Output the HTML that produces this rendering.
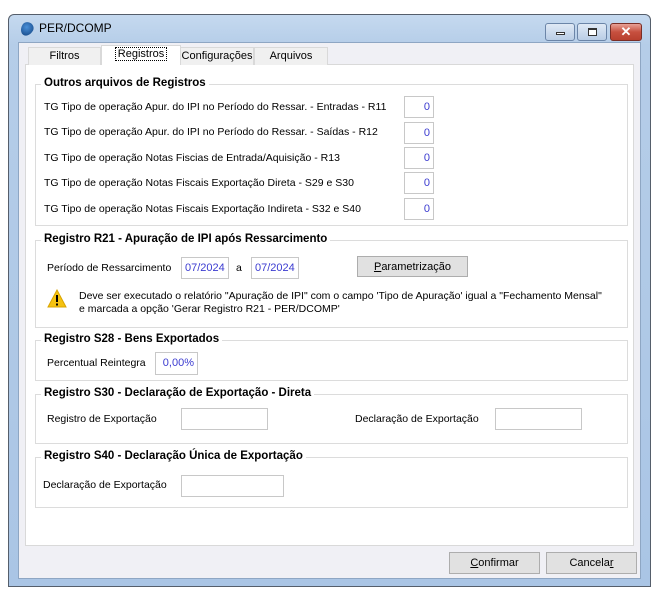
<!DOCTYPE html>
<html><head><style>
*{box-sizing:border-box;margin:0;padding:0}
body{width:657px;height:599px;background:#fff;font-family:"Liberation Sans",sans-serif;font-size:10.5px;color:#000;position:relative;overflow:hidden}
.a{position:absolute}
.win{left:8px;top:14px;width:643px;height:573px;border:1px solid #555e6b;border-radius:6px 6px 0 0;background:linear-gradient(#c5d9ef,#b5cde8 30px,#aac5e5);}
.body{left:18px;top:42px;width:623px;height:537px;background:#f0f0f5;border:1px solid #8ea6c3}
.panel{left:25px;top:64px;width:609px;height:482px;background:#fff;border:1px solid #d9d9d9}
.tab{top:47px;height:18px;background:#f0f0f0;border:1px solid #d9d9d9;border-bottom:none;text-align:center;line-height:17px;font-size:11px}
.grp{border:1px solid #dcdcdc;left:35px;width:593px}
.gt{font-weight:bold;background:#fff;padding:0 3px;left:41px;font-size:11.5px}
.in{border:1px solid #c8c8c8;background:#fff;height:22px;color:#3b3bd0;line-height:20px;padding:0 3px;font-size:11px}
.btn{border:1px solid #adadad;background:#e1e1e1;text-align:center;line-height:20px;height:22px;font-size:11px}
</style></head><body>
<div class="a win"></div>
<div class="a" style="left:21px;top:22px;width:12px;height:14px;background:radial-gradient(circle at 40% 40%,#4a90d9,#0d3d7a);border-radius:50% 50% 50% 50%/40% 40% 60% 60%;transform:rotate(30deg)"></div>
<div class="a" style="left:39px;top:21px;font-size:12px">PER/DCOMP</div>
<div class="a" style="left:545px;top:23px;width:30px;height:18px;border:1px solid #6b85a8;border-radius:3px;background:linear-gradient(#dfe9f5,#b9cde6)"><div class="a" style="left:10px;top:8px;width:9px;height:3px;border:1px solid #333;background:#fff"></div></div>
<div class="a" style="left:577px;top:23px;width:30px;height:18px;border:1px solid #6b85a8;border-radius:3px;background:linear-gradient(#dfe9f5,#b9cde6)"><div class="a" style="left:10px;top:4px;width:9px;height:8px;border:1px solid #333;border-top-width:2px;background:#fff"></div></div>
<div class="a" style="left:610px;top:23px;width:32px;height:18px;border:1px solid #7a2e26;border-radius:3px;background:linear-gradient(#e8a196,#c7503f 50%,#b8402f);color:#fff;font-weight:bold;text-align:center;line-height:16px;font-size:13px">✕</div>
<div class="a body"></div>
<div class="a panel"></div>
<div class="a tab" style="left:28px;width:73px">Filtros</div>
<div class="a tab" style="left:180px;width:74px">Configurações</div>
<div class="a tab" style="left:254px;width:74px">Arquivos</div>
<div class="a tab" style="left:101px;top:45px;width:80px;height:20px;background:#fff"><span style="border:1px dotted #000;padding:0 2px">Registros</span></div>

<div class="a grp" style="top:84px;height:142px"></div>
<div class="a gt" style="top:77px">Outros arquivos de Registros</div>
<div class="a" style="left:44px;top:101px">TG Tipo de operação Apur. do IPI no Período do Ressar. - Entradas - R11</div>
<div class="a" style="left:44px;top:126px">TG Tipo de operação Apur. do IPI no Período do Ressar. - Saídas - R12</div>
<div class="a" style="left:44px;top:152px">TG Tipo de operação Notas Fiscias de Entrada/Aquisição - R13</div>
<div class="a" style="left:44px;top:177px">TG Tipo de operação Notas Fiscais Exportação Direta - S29 e S30</div>
<div class="a" style="left:44px;top:203px">TG Tipo de operação Notas Fiscais Exportação Indireta - S32 e S40</div>
<div class="a in" style="left:404px;top:96px;width:30px;text-align:right">0</div>
<div class="a in" style="left:404px;top:122px;width:30px;text-align:right">0</div>
<div class="a in" style="left:404px;top:147px;width:30px;text-align:right">0</div>
<div class="a in" style="left:404px;top:172px;width:30px;text-align:right">0</div>
<div class="a in" style="left:404px;top:198px;width:30px;text-align:right">0</div>

<div class="a grp" style="top:240px;height:88px"></div>
<div class="a gt" style="top:233px">Registro R21 - Apuração de IPI após Ressarcimento</div>
<div class="a" style="left:47px;top:262px">Período de Ressarcimento</div>
<div class="a in" style="left:181px;top:257px;width:48px">07/2024</div>
<div class="a" style="left:236px;top:262px">a</div>
<div class="a in" style="left:251px;top:257px;width:48px">07/2024</div>
<div class="a btn" style="left:357px;top:256px;width:111px;height:21px"><u>P</u>arametrização</div>
<svg class="a" style="left:47px;top:289px" width="20" height="20"><path d="M10 1L19 18H1Z" fill="#f5c211" stroke="#d9a400"/><rect x="9" y="6" width="2" height="7" fill="#000"/><rect x="9" y="14.5" width="2" height="2" fill="#000"/></svg>
<div class="a" style="left:79px;top:290px;line-height:13px">Deve ser executado o relatório "Apuração de IPI" com o campo 'Tipo de Apuração' igual a "Fechamento Mensal"<br>e marcada a opção 'Gerar Registro R21 - PER/DCOMP'</div>

<div class="a grp" style="top:340px;height:41px"></div>
<div class="a gt" style="top:333px">Registro S28 - Bens Exportados</div>
<div class="a" style="left:47px;top:357px">Percentual Reintegra</div>
<div class="a in" style="left:155px;top:352px;width:43px;height:23px;text-align:right">0,00%</div>

<div class="a grp" style="top:394px;height:50px"></div>
<div class="a gt" style="top:387px">Registro S30 - Declaração de Exportação - Direta</div>
<div class="a" style="left:47px;top:413px">Registro de Exportação</div>
<div class="a in" style="left:181px;top:408px;width:87px"></div>
<div class="a" style="left:355px;top:413px">Declaração de Exportação</div>
<div class="a in" style="left:495px;top:408px;width:87px"></div>

<div class="a grp" style="top:457px;height:51px"></div>
<div class="a gt" style="top:450px">Registro S40 - Declaração Única de Exportação</div>
<div class="a" style="left:43px;top:479px">Declaração de Exportação</div>
<div class="a in" style="left:181px;top:475px;width:103px"></div>

<div class="a btn" style="left:449px;top:552px;width:91px"><u>C</u>onfirmar</div>
<div class="a btn" style="left:546px;top:552px;width:91px">Cancela<u>r</u></div>
</body></html>
